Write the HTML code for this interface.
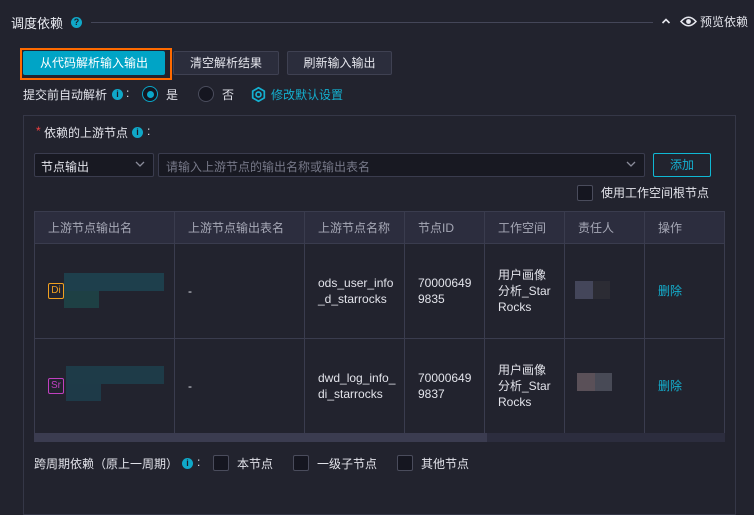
<!DOCTYPE html>
<html><head><meta charset="utf-8"><style>
*{box-sizing:border-box;margin:0;padding:0}
body{width:754px;height:492px;overflow:hidden;background:#22232e;font-family:"Liberation Sans","Noto Sans CJK SC",sans-serif;font-size:12px;color:#e2e3ea;position:relative}
.a{position:absolute;white-space:nowrap}
.btn{position:absolute;top:51px;height:24px;border:1px solid #3f4152;background:#2b2d3c;color:#e6e7ee;font-size:12px;text-align:center;line-height:22px;border-radius:2px}
.info{position:absolute;width:11px;height:11px;border-radius:50%;background:#10a8c8;color:#1b1c26;font-size:9px;font-weight:bold;text-align:center;line-height:11px}
.cb{position:absolute;width:16px;height:16px;border:1px solid #4a4c5c;background:#151620;border-radius:2px}
table{position:absolute;left:34px;top:211px;border-collapse:collapse;width:691px}
td,th{border:1px solid #3a3c4e;vertical-align:middle;text-align:left;padding:0 0 0 13px;font-weight:normal;font-size:12px;line-height:16px}
th{background:#2c2d3e;color:#a6a8b6;height:32px}
td{height:95px}
.tag{display:inline-block;width:16px;height:16px;font-size:10px;line-height:13px;text-align:center;border-radius:2px;vertical-align:middle}
</style></head><body>
<div class="a" style="left:11px;top:13px;font-size:13px;color:#eceef4">调度依赖</div>
<div class="info" style="left:71px;top:17px;">?</div>
<div class="a" style="left:91px;top:22px;width:562px;height:1px;background:#444658"></div>
<svg class="a" style="left:661px;top:17px" width="10" height="8"><path d="M1.5 6 L5 2.5 L8.5 6" stroke="#e6e7ee" stroke-width="1.6" fill="none"/></svg>
<svg class="a" style="left:680px;top:15px" width="17" height="13"><path d="M1 6.5 Q8.5 -2 16 6.5 Q8.5 15 1 6.5Z" stroke="#e6e7ee" stroke-width="1.5" fill="none"/><circle cx="8.5" cy="6.5" r="2.4" fill="#e6e7ee"/></svg>
<div class="a" style="left:700px;top:13px;">预览依赖</div>

<div class="a" style="left:20px;top:48px;width:152px;height:32px;border:2px solid #ff6a00"></div>
<div class="btn" style="left:23px;width:142px;background:#00a4c6;border-color:#00a4c6;color:#fff">从代码解析输入输出</div>
<div class="btn" style="left:173px;width:106px">清空解析结果</div>
<div class="btn" style="left:287px;width:105px">刷新输入输出</div>

<div class="a" style="left:23px;top:86px">提交前自动解析</div>
<div class="info" style="left:112px;top:89px;">i</div>
<div class="a" style="left:126px;top:86px">:</div>
<div class="a" style="left:142px;top:86px;width:16px;height:16px;border-radius:50%;border:1.5px solid #0aa6c8;background:#151620"></div>
<div class="a" style="left:146.5px;top:90.5px;width:7px;height:7px;border-radius:50%;background:#0aa6c8"></div>
<div class="a" style="left:166px;top:86px">是</div>
<div class="a" style="left:198px;top:86px;width:16px;height:16px;border-radius:50%;border:1px solid #4a4c5c;background:#151620"></div>
<div class="a" style="left:222px;top:86px">否</div>
<svg class="a" style="left:250px;top:86px" width="17" height="17" viewBox="0 0 24 24"><circle cx="12" cy="12" r="3.5" stroke="#14b0d0" stroke-width="2.4" fill="none"/><path d="M12 2.5 L20.2 7.2 L20.2 16.8 L12 21.5 L3.8 16.8 L3.8 7.2Z" stroke="#14b0d0" stroke-width="2.4" fill="none" stroke-linejoin="round"/></svg>
<div class="a" style="left:271px;top:86px;color:#14b0d0">修改默认设置</div>

<div class="a" style="left:23px;top:115px;width:713px;height:400px;border:1px solid #353747"></div>
<div class="a" style="left:36px;top:124px;color:#f04040">*</div>
<div class="a" style="left:44px;top:124px">依赖的上游节点</div>
<div class="info" style="left:132px;top:127px;">i</div>
<div class="a" style="left:147px;top:124px">:</div>

<div class="a" style="left:34px;top:153px;width:120px;height:24px;border:1px solid #3a3c4e;background:#181922;border-radius:2px;padding:4px 0 0 6px">节点输出</div>
<svg class="a" style="left:135px;top:160px" width="10" height="8"><path d="M1 2 L5 6 L9 2" stroke="#8a8c9a" stroke-width="1.3" fill="none"/></svg>
<div class="a" style="left:158px;top:153px;width:487px;height:24px;border:1px solid #3a3c4e;background:#181922;border-radius:2px;padding:4px 0 0 7px;color:#767888">请输入上游节点的输出名称或输出表名</div>
<svg class="a" style="left:626px;top:160px" width="10" height="8"><path d="M1 2 L5 6 L9 2" stroke="#8a8c9a" stroke-width="1.3" fill="none"/></svg>
<div class="a" style="left:653px;top:153px;width:58px;height:24px;border:1px solid #10b8d4;border-radius:2px;text-align:center;line-height:22px;color:#14b0d0">添加</div>
<div class="cb" style="left:577px;top:185px"></div>
<div class="a" style="left:601px;top:184px">使用工作空间根节点</div>

<table>
<tr><th style="width:140px">上游节点输出名</th><th style="width:130px">上游节点输出表名</th><th style="width:100px">上游节点名称</th><th style="width:80px">节点ID</th><th style="width:80px">工作空间</th><th style="width:80px">责任人</th><th>操作</th></tr>
<tr><td><span class="tag" style="border:1.5px solid #f0a020;color:#f0a020">Di</span></td><td>-</td><td>ods_user_info<br>_d_starrocks</td><td>70000649<br>9835</td><td>用户画像<br>分析_Star<br>Rocks</td><td></td><td style="color:#14b0d0">删除</td></tr>
<tr><td><span class="tag" style="border:1.5px solid #c040c0;color:#c040c0">Sr</span></td><td>-</td><td>dwd_log_info_<br>di_starrocks</td><td>70000649<br>9837</td><td>用户画像<br>分析_Star<br>Rocks</td><td></td><td style="color:#14b0d0">删除</td></tr>
</table>
<div class="a" style="left:64px;top:273px;width:100px;height:18px;background:#1e3f4c"></div>
<div class="a" style="left:64px;top:291px;width:35px;height:17px;background:#1e4044"></div>
<div class="a" style="left:66px;top:366px;width:98px;height:18px;background:#1e3b48"></div>
<div class="a" style="left:66px;top:384px;width:35px;height:17px;background:#1e3a48"></div>
<div class="a" style="left:575px;top:281px;width:18px;height:18px;background:#44465a"></div>
<div class="a" style="left:593px;top:281px;width:17px;height:18px;background:#2c2c34"></div>
<div class="a" style="left:577px;top:373px;width:18px;height:18px;background:#5a5058"></div>
<div class="a" style="left:595px;top:373px;width:17px;height:18px;background:#484a56"></div>
<div class="a" style="left:34px;top:433px;width:691px;height:9px;background:#2c2d3e"></div>
<div class="a" style="left:34px;top:433px;width:453px;height:9px;background:#3b3c50"></div>

<div class="a" style="left:34px;top:455px">跨周期依赖（原上一周期）</div>
<div class="info" style="left:182px;top:458px;">i</div>
<div class="a" style="left:197px;top:455px">:</div>
<div class="cb" style="left:213px;top:455px"></div><div class="a" style="left:237px;top:455px">本节点</div>
<div class="cb" style="left:293px;top:455px"></div><div class="a" style="left:317px;top:455px">一级子节点</div>
<div class="cb" style="left:397px;top:455px"></div><div class="a" style="left:421px;top:455px">其他节点</div>
</body></html>
